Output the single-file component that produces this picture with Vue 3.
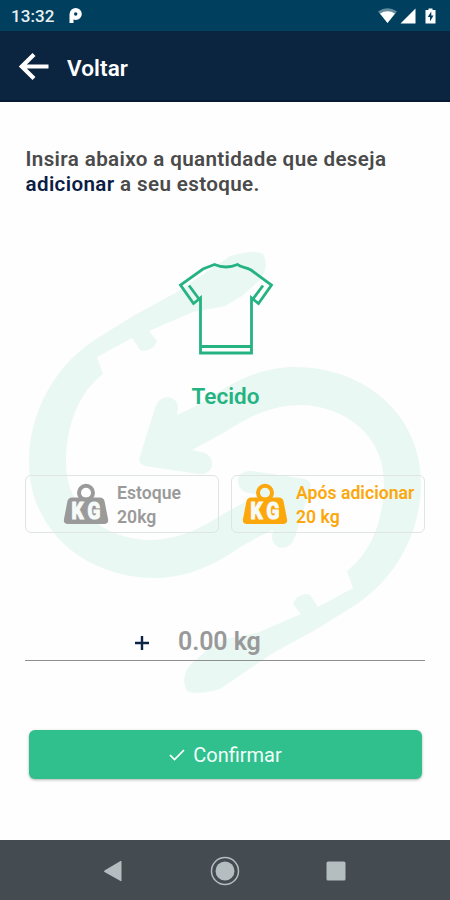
<template>
  <div class="screen">
    <div class="status-bar">
      <span class="clock">13:32</span>
      <svg class="app-mark" width="14" height="18" viewBox="0 0 14 18">
        <path d="M3.500 16V7.500" fill="none" stroke="#fff" stroke-width="4" />
        <circle cx="7.700" cy="7" r="3.900" fill="none" stroke="#fff" stroke-width="4.400" />
      </svg>
      <svg class="status-icons" width="60" height="20" viewBox="0 0 60 20">
        <path d="M0 5.500Q9.500-1 19 5.500L9.500 17z" fill="#fff" opacity=".4" />
        <path d="M2 7.500Q9.500 3 17 7.500L9.500 17z" fill="#fff" />
        <path d="M37.500 2.500v15h-15z" fill="#fff" />
        <path d="M47.500 4h3V2.500h4V4h3v13.500h-10z" fill="#fff" />
        <path d="M53.300 5.500l-3.600 5.500h2.300v4.500l3.500-6h-2.200z" fill="#00405e" />
      </svg>
    </div>

    <header class="app-bar">
      <svg width="32" height="30" viewBox="0 0 32 30" fill="none" stroke="#fff" stroke-width="4.200">
        <path d="M30.500 14.500H4M16 2.500L3.800 14.500L16 26.500" />
      </svg>
      <span class="back-label">Voltar</span>
    </header>

    <main class="content">
      <svg class="watermark" width="450" height="738" viewBox="0 102 450 738" fill="#eaf8f3">
        <path :d="swirl" />
        <path :d="swirl" transform="rotate(180 225 472.500)" />
      </svg>

      <p class="intro">Insira abaixo a quantidade que deseja<br><strong>adicionar</strong> a seu estoque.</p>

      <div class="material">
        <svg width="96" height="96" viewBox="0 0 96 96" fill="none" stroke="#25b382" stroke-width="2.800">
          <path d="M36.500 3.500L25 8L2.500 24L15.500 42.500L22.500 37V92H73.500V37L80.500 42.500L93.500 24L73 9C68 6 63 6.500 59.500 3.500Q48 8.500 36.500 3.500z" />
          <path d="M11 24.500L22.500 40M85 24.500L73.500 40M22.500 85.500H73.500" />
        </svg>
        <span class="material-name">Tecido</span>
      </div>

      <div class="cards">
        <div v-for="card in cards" :key="card.label" class="card" :class="card.kind">
          <svg width="46" height="42" viewBox="0 0 46 42">
            <circle cx="23" cy="9.800" r="7" fill="none" stroke="currentColor" stroke-width="4" />
            <path d="M9 14.500H37Q40.500 14.500 41.500 18L45 36Q46 41 41 41H5Q0 41 1 36L4.500 18Q5.500 14.500 9 14.500z" fill="currentColor" />
            <text x="10.500 30" y="36.200" transform="scale(.82 1)" class="kg">KG</text>
          </svg>
          <div class="card-text">
            <span>{{ card.label }}</span>
            <span>{{ card.value }}</span>
          </div>
        </div>
      </div>

      <div class="amount">
        <svg width="14" height="14" viewBox="0 0 14 14" fill="none" stroke="#0b2345" stroke-width="2.400">
          <path d="M7 0V14M0 7H14" />
        </svg>
        <span>0.00 kg</span>
      </div>

      <button class="confirm" type="button">
        <svg width="16" height="12" viewBox="0 0 16 12" fill="none" stroke="#fff" stroke-width="1.700">
          <path d="M1 6L5.500 10.500L15 1" />
        </svg>
        <span>Confirmar</span>
      </button>
    </main>

    <nav class="nav-bar">
      <svg width="30" height="30" viewBox="0 0 30 30" fill="#b4bdc0">
        <path d="M22.500 5.500V24.500Q22.500 25.500 21.500 25L5.500 16Q4.500 15.200 5.500 14.500L21.500 5Q22.500 4.600 22.500 5.500z" />
      </svg>
      <svg width="30" height="30" viewBox="0 0 30 30" fill="#b4bdc0">
        <circle cx="15" cy="15" r="13.500" fill="none" stroke="#b4bdc0" stroke-width="1.500" />
        <circle cx="15" cy="15" r="9.500" />
      </svg>
      <svg width="30" height="30" viewBox="0 0 30 30" fill="#b4bdc0">
        <rect x="5.500" y="5.500" width="19" height="19" rx="1.500" />
      </svg>
    </nav>
  </div>
</template>

<script setup>
const cards = [
  { label: 'Estoque', value: '20kg', kind: 'current' },
  { label: 'Após adicionar', value: '20 kg', kind: 'after' },
]

// one half of the cycle arrow, the other half is the same path turned around
const swirl = `M140 456 L155 408 Q159 397 168 397 Q178 399 178 408 L177 415
  Q202 404 225 388 C247 375 270 367 295 367 C365 367 421 415 421 483
  C421 530 398 576 357 604 L317 629 L273 653 L220 689 Q196 696 187 691
  Q180 679 190 665 L208 649 L225 639 L257 633 L301 614 L293 604
  Q296 595 306 594 L310 595 L318 607 L353 588 L347 571
  C372 552 384 518 384 482 C384 438 348 406 300 405 C265 406 243 421 225 432
  L192 450 L205 453 Q213 457 212 467 Q208 475 198 474 L145 466 Q137 463 140 456Z`
</script>

<style>
body {
  margin: 0;
}
</style>

<style scoped>
.screen {
  width: 450px;
  height: 900px;
  display: flex;
  flex-direction: column;
  overflow: hidden;
  background: #fefefe;
  font-family: Roboto, sans-serif;
}

.status-bar {
  height: 31px;
  box-sizing: border-box;
  display: flex;
  align-items: center;
  padding: 1px 12px 0 11px;
  background: #00405e;
  color: #e8f0f3;
}

.clock {
  font-size: 17px;
  font-weight: 500;
  letter-spacing: 0.1px;
}

.app-mark {
  margin-left: 13px;
}

.status-icons {
  margin-left: auto;
}

.app-bar {
  height: 71px;
  box-sizing: border-box;
  display: flex;
  align-items: center;
  padding: 2px 18px 0;
  background: #0b2440;
  border-bottom: 2px solid #061a36;
  color: #fff;
}

.back-label {
  margin: 3px 0 0 17px;
  font-size: 22.500px;
  font-weight: 600;
  letter-spacing: 0.1px;
}

.content {
  position: relative;
  height: 738px;
  box-sizing: border-box;
  padding: 45px 25px 0;
  display: flex;
  flex-direction: column;
}

.content > * {
  position: relative;
  flex-shrink: 0;
}

.content > .watermark {
  position: absolute;
  top: 0;
  left: 0;
}

.intro {
  margin: 0;
  padding-left: 0.500px;
  color: #4a4a4a;
  font-size: 20.600px;
  font-weight: 600;
  line-height: 25px;
  letter-spacing: 0.37px;
  white-space: nowrap;
}

.intro strong {
  color: #0b1d45;
  font-weight: 600;
}

.material {
  margin-top: 64px;
  padding-left: 1px;
  display: flex;
  flex-direction: column;
  align-items: center;
}

.material-name {
  margin-top: 23px;
  color: #25b382;
  font-size: 22.500px;
  font-weight: 600;
  line-height: 32px;
}

.cards {
  display: flex;
  gap: 12px;
  margin-top: 63px;
}

.card {
  width: 194px;
  height: 58px;
  box-sizing: border-box;
  display: flex;
  align-items: center;
  gap: 8px;
  border: 1.500px solid #dfe5e2;
  border-radius: 6px;
}

.card.current {
  padding-left: 37px;
  color: #9a9a9a;
}

.card.after {
  padding-left: 10px;
  color: #fca70b;
}

.kg {
  fill: #f6fbf9;
  stroke: #f6fbf9;
  stroke-width: 1.2px;
  font-size: 23px;
  font-weight: 800;
}

.card-text {
  display: flex;
  flex-direction: column;
  padding-top: 2px;
  font-size: 17.600px;
  font-weight: 600;
  line-height: 24px;
  letter-spacing: 0.03px;
  white-space: nowrap;
}

.amount {
  height: 45px;
  margin-top: 83px;
  box-sizing: border-box;
  display: flex;
  align-items: center;
  gap: 29px;
  padding: 6px 0 0 110px;
  border-bottom: 1px solid #8f8f8f;
  color: #999;
  font-size: 25px;
  font-weight: 600;
  letter-spacing: -0.1px;
}

.amount svg {
  margin-top: 4px;
}

.confirm {
  height: 49px;
  margin: 69px 3px 0 4px;
  padding: 0;
  display: flex;
  align-items: center;
  justify-content: center;
  gap: 8px;
  border: 0;
  border-radius: 6px;
  background: #30c08e;
  box-shadow: 0 1px 3px rgba(0, 0, 0, 0.3);
  color: #f2fffa;
  font-family: inherit;
  font-size: 20px;
}

.nav-bar {
  height: 60px;
  box-sizing: border-box;
  display: flex;
  align-items: center;
  justify-content: center;
  gap: 81px;
  padding-top: 1px;
  background: #444b51;
}
</style>
